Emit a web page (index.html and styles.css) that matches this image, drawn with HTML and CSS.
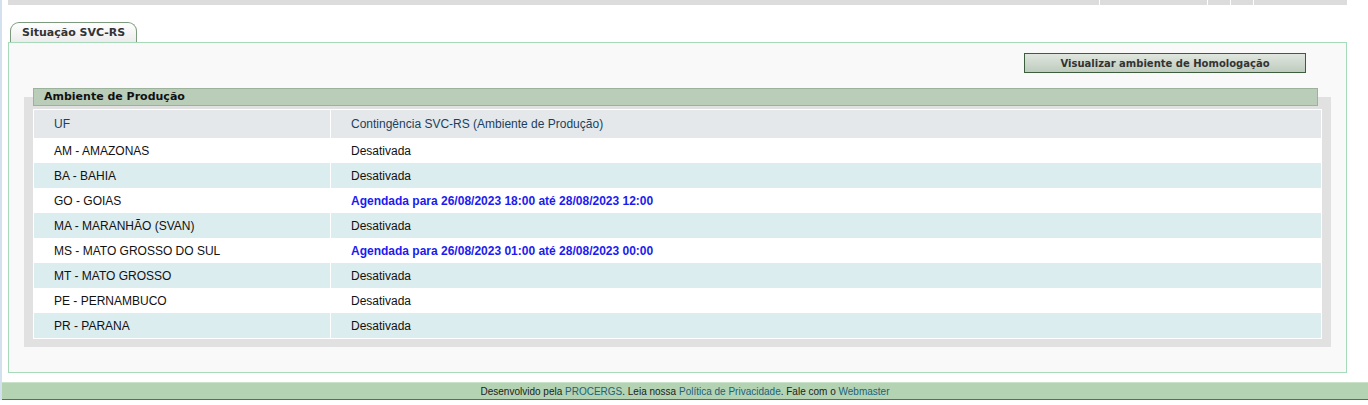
FILE: index.html
```html
<!DOCTYPE html>
<html lang="pt-BR">
  <head>
    <meta charset="UTF-8" />
    <title>Situação SVC-RS</title>
    <link rel="stylesheet" href="styles.css">
  </head>

  <body>
    <div class="page">
      <div class="topbar">
        <span class="cell cell-main"></span>
        <span class="cell cell-a"></span>
        <span class="cell cell-b"></span>
        <span class="cell cell-b"></span>
        <span class="cell cell-c"></span>
      </div>

      <div class="content">
        <div class="tabs">
          <span class="tab">Situação SVC-RS</span>
        </div>
        <div class="panel">
          <div class="actions">
            <button class="btn">Visualizar ambiente de Homologação</button>
          </div>

          <div class="box">
            <div class="box-title">Ambiente de Produção</div>
            <table class="grid">
              <thead>
                <tr>
                  <th class="col-uf">UF</th>
                  <th>Contingência SVC-RS (Ambiente de Produção)</th>
                </tr>
              </thead>
              <tbody>
                <tr><td>AM - AMAZONAS</td><td>Desativada</td></tr>
                <tr class="alt"><td>BA - BAHIA</td><td>Desativada</td></tr>
                <tr><td>GO - GOIAS</td><td class="scheduled">Agendada para 26/08/2023 18:00 até 28/08/2023 12:00</td></tr>
                <tr class="alt"><td>MA - MARANHÃO (SVAN)</td><td>Desativada</td></tr>
                <tr><td>MS - MATO GROSSO DO SUL</td><td class="scheduled">Agendada para 26/08/2023 01:00 até 28/08/2023 00:00</td></tr>
                <tr class="alt"><td>MT - MATO GROSSO</td><td>Desativada</td></tr>
                <tr><td>PE - PERNAMBUCO</td><td>Desativada</td></tr>
                <tr class="alt"><td>PR - PARANA</td><td>Desativada</td></tr>
              </tbody>
            </table>
          </div>
        </div>
      </div>

      <div class="footer">
        Desenvolvido pela <a href="#">PROCERGS</a>. Leia nossa <a href="#">Política de Privacidade</a>. Fale com o <a href="#">Webmaster</a>
      </div>
    </div>
  </body>
</html>
```

FILE: styles.css
```css
body {
  margin: 0;
  padding: 0;
  background-color: #ffffff;
  font-family: "Liberation Sans", Arial, sans-serif;
  font-size: 12px;
}

.page {
  border-left: 2px solid #d3e1ee;
}

.topbar {
  display: flex;
  height: 5px;
  width: 1339px;
  margin-left: 6px;
}

.cell {
  background-color: #dcdcdc;
}

.cell + .cell {
  border-left: 1px solid #ffffff;
}

.cell-main {
  width: 1091px;
}

.cell-a {
  width: 107px;
}

.cell-b {
  width: 22px;
}

.cell-c {
  width: 93px;
}

.content {
  width: 1339px;
  margin-left: 6px;
  padding-top: 17px;
}

.tabs {
  display: flex;
  padding-left: 2px;
}

.tab {
  display: inline-block;
  height: 19px;
  line-height: 20px;
  padding: 0 11px 0 11px;
  border: 1px solid #7c9a7c;
  border-bottom: none;
  border-radius: 9px 9px 0 0;
  background: linear-gradient(#ffffff, #ececec);
  font-family: "DejaVu Sans", Verdana, sans-serif;
  font-size: 11px;
  font-weight: bold;
  color: #333333;
}

.panel {
  border: 1px solid #a6dabb;
  background-color: #f9f9f9;
  padding-top: 10px;
  box-sizing: border-box;
  height: 331px;
}

.actions {
  display: flex;
  justify-content: flex-end;
  padding-right: 40px;
}

.btn {
  width: 282px;
  height: 20px;
  padding: 0;
  border: 1px solid #3d5e3d;
  background: linear-gradient(#dfe6de, #bfcbbe);
  font-family: "DejaVu Sans", Verdana, sans-serif;
  font-size: 10px;
  font-weight: bold;
  color: #333333;
  cursor: pointer;
}

.box {
  margin: 24px 15px 0;
  padding: 0 9px 8px;
  background-color: #e1e1e1;
}

.box-title {
  position: relative;
  top: -9px;
  margin-bottom: -9px;
  width: 1273px;
  height: 16px;
  line-height: 16px;
  padding-left: 10px;
  border: 1px solid #9db29d;
  background-color: #b9cdb9;
  font-family: "DejaVu Sans", Verdana, sans-serif;
  font-size: 11px;
  font-weight: bold;
  color: #111111;
}

.grid {
  width: 100%;
  margin-top: 3px;
  border-collapse: collapse;
  border: 1px solid #ffffff;
}

.grid th {
  height: 28px;
  padding: 0 0 0 20px;
  background-color: #e4e8eb;
  text-align: left;
  font-weight: normal;
  color: #1b3f5e;
}

.grid .col-uf {
  width: 276px;
}

.grid td {
  height: 25px;
  padding: 0 0 0 20px;
  background-color: #ffffff;
  color: #111111;
}

.grid th:first-child,
.grid td:first-child {
  border-right: 1px solid #ffffff;
}

.grid tr.alt td {
  background-color: #dcedf0;
}

.grid td.scheduled {
  font-weight: bold;
  color: #1b1bf0;
}

.footer {
  margin-top: 9px;
  height: 16px;
  line-height: 17px;
  border-top: 1px solid #c9e2c9;
  border-bottom: 1px solid #3d7f52;
  background-color: #b3d3b3;
  text-align: center;
  font-size: 10px;
  color: #222222;
}

.footer a {
  color: #21617a;
  text-decoration: none;
}
```
